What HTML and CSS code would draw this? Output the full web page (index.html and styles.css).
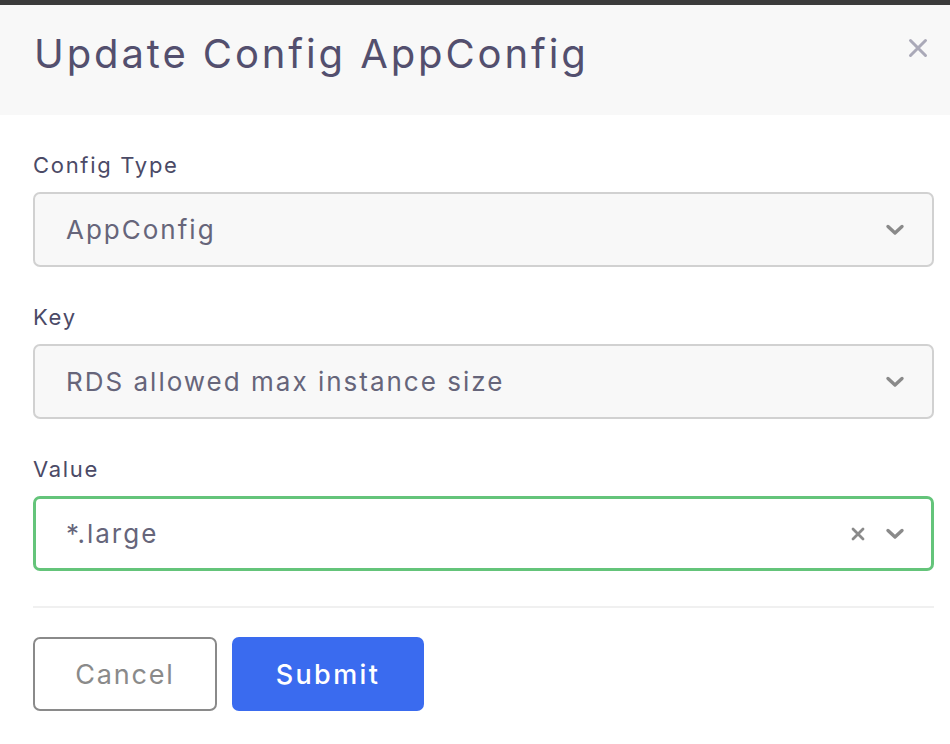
FILE: index.html
```html
<!DOCTYPE html>
<html>
<head>
<meta charset="utf-8">
<link rel="stylesheet" href="styles.css">
</head>
<body>
<div class="topbar"></div>
<div class="modal">
  <header class="modal-header">
    <h1 class="modal-title">Update Config AppConfig</h1>
    <button class="close-btn" aria-label="Close">
      <svg width="22" height="22" viewBox="0 0 22 22"><path d="M3.5 3.5 L18.5 18.5 M18.5 3.5 L3.5 18.5" stroke="#aaa9b8" stroke-width="3" stroke-linecap="round"/></svg>
    </button>
  </header>
  <div class="modal-body">
    <div class="field">
      <label class="field-label">Config Type</label>
      <div class="select">
        <span class="select-value">AppConfig</span>
        <span class="select-icons">
          <svg class="chevron" width="20" height="12" viewBox="0 0 20 12"><path d="M3 2.5 L10 9 L17 2.5" fill="none" stroke="#8a8a8a" stroke-width="3.4" stroke-linecap="round" stroke-linejoin="round"/></svg>
        </span>
      </div>
    </div>
    <div class="field">
      <label class="field-label">Key</label>
      <div class="select">
        <span class="select-value">RDS allowed max instance size</span>
        <span class="select-icons">
          <svg class="chevron" width="20" height="12" viewBox="0 0 20 12"><path d="M3 2.5 L10 9 L17 2.5" fill="none" stroke="#8a8a8a" stroke-width="3.4" stroke-linecap="round" stroke-linejoin="round"/></svg>
        </span>
      </div>
    </div>
    <div class="field field-last">
      <label class="field-label">Value</label>
      <div class="select select-focused">
        <span class="select-value">*.large</span>
        <span class="select-icons">
          <svg class="clear" width="14" height="14" viewBox="0 0 14 14"><path d="M2 2 L12 12 M12 2 L2 12" stroke="#8a8a8a" stroke-width="2.8" stroke-linecap="round"/></svg>
          <svg class="chevron" width="20" height="12" viewBox="0 0 20 12"><path d="M3 2.5 L10 9 L17 2.5" fill="none" stroke="#8a8a8a" stroke-width="3.4" stroke-linecap="round" stroke-linejoin="round"/></svg>
        </span>
      </div>
    </div>
    <div class="footer">
      <button class="btn btn-cancel">Cancel</button>
      <button class="btn btn-submit">Submit</button>
    </div>
  </div>
</div>
</body>
</html>
```

FILE: styles.css
```css
* { box-sizing: border-box; }
html, body { margin: 0; padding: 0; background: #ffffff; }
body { font-family: Inter, "Open Sans", "Liberation Sans", sans-serif; overflow: hidden; }

.topbar { height: 5px; background: #3b3b3b; }

.modal-header {
  height: 110px;
  background: #f8f8f8;
  display: flex;
  align-items: center;
  justify-content: space-between;
  padding: 0 16px 0 34px;
}
.modal-title {
  margin: 0 0 13px 0;
  font-size: 40px;
  font-weight: 400;
  color: #534f6e;
  letter-spacing: 2.9px;
}
.close-btn {
  border: 0;
  background: transparent;
  padding: 0;
  width: 32px;
  height: 32px;
  display: flex;
  align-items: center;
  justify-content: center;
  margin-bottom: 24px;
}

.modal-body { padding: 37px 16px 0 33px; }

.field { margin-bottom: 37px; }
.field-last { margin-bottom: 0; }
.field-label {
  display: block;
  font-size: 22px;
  line-height: 26px;
  color: #4b4a66;
  letter-spacing: 1.7px;
  margin-bottom: 14px;
}
.select {
  height: 75px;
  background: #f8f8f8;
  border: 2px solid #d1d1d1;
  border-radius: 7px;
  display: flex;
  align-items: center;
  justify-content: space-between;
  padding: 0 27px 0 31px;
}
.select-focused {
  background: #ffffff;
  border: 3px solid #64c47a;
  padding-left: 30px;
  padding-right: 26px;
}
.select-value {
  font-size: 26px;
  color: #66657a;
  letter-spacing: 2px;
}
.select-icons { display: flex; align-items: center; gap: 20px; }

.footer {
  border-top: 2px solid #f0f0f0;
  margin-top: 35px;
  padding-top: 29px;
  display: flex;
  gap: 15px;
}
.btn {
  height: 74px;
  border-radius: 7px;
  font-family: inherit;
  font-size: 27px;
  padding: 0;
}
.btn-cancel {
  width: 184px;
  background: #fff;
  border: 2px solid #8a8a8a;
  color: #8a8a8a;
  letter-spacing: 1.8px;
}
.btn-submit {
  width: 192px;
  background: #3a6bef;
  border: 0;
  color: #fff;
  font-weight: 500;
  letter-spacing: 2.4px;
}
```
